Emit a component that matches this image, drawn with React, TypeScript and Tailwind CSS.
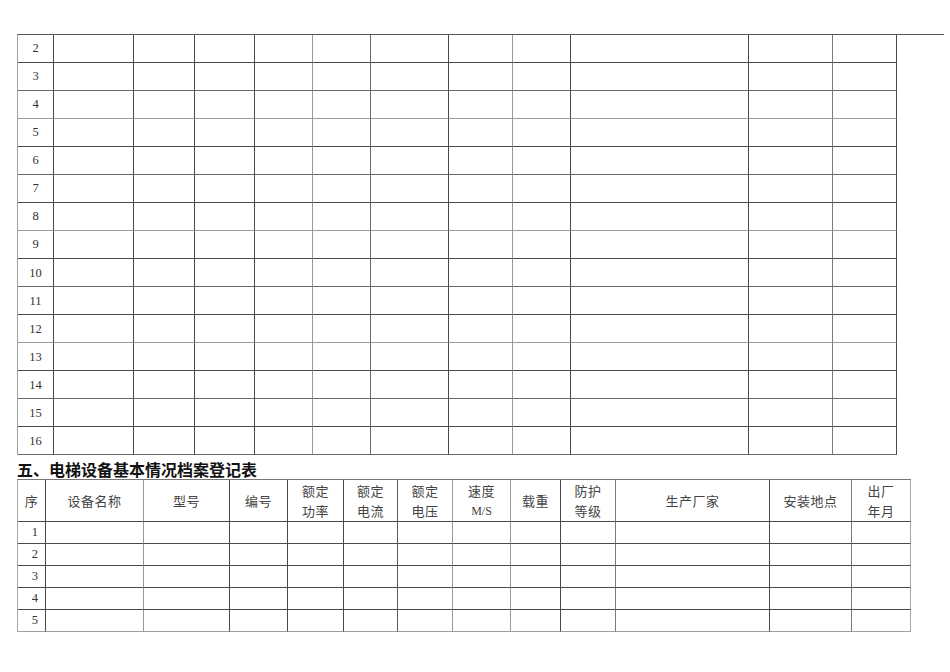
import React from "react";

const topCols = [
  { w: "w-[36px]", b: "border-r-[#4a4a4a]" },
  { w: "w-[80px]", b: "border-r-[#4a4a4a]" },
  { w: "w-[61px]", b: "border-r-[#4a4a4a]" },
  { w: "w-[60px]", b: "border-r-[#4a4a4a]" },
  { w: "w-[58px]", b: "border-r-[#9a9a9a]" },
  { w: "w-[58px]", b: "border-r-[#6a6a6a]" },
  { w: "w-[78px]", b: "border-r-[#4a4a4a]" },
  { w: "w-[64px]", b: "border-r-[#9a9a9a]" },
  { w: "w-[58px]", b: "border-r-[#4a4a4a]" },
  { w: "w-[178px]", b: "border-r-[#4a4a4a]" },
  { w: "w-[84px]", b: "border-r-[#7a7a7a]" },
  { w: "w-[64px]", b: "border-r-[#4a4a4a]" },
];

const topRowBorders = [
  "border-b-[#4a4a4a]",
  "border-b-[#6a6a6a]",
  "border-b-[#9a9a9a]",
  "border-b-[#4a4a4a]",
  "border-b-[#6a6a6a]",
  "border-b-[#4a4a4a]",
  "border-b-[#9a9a9a]",
  "border-b-[#4a4a4a]",
  "border-b-[#6a6a6a]",
  "border-b-[#4a4a4a]",
  "border-b-[#9a9a9a]",
  "border-b-[#4a4a4a]",
  "border-b-[#6a6a6a]",
  "border-b-[#4a4a4a]",
  "border-b-[#6a6a6a]",
];

const botCols = [
  { w: "w-[28px]", b: "border-r-[#4a4a4a]" },
  { w: "w-[98px]", b: "border-r-[#9a9a9a]" },
  { w: "w-[86px]", b: "border-r-[#4a4a4a]" },
  { w: "w-[58px]", b: "border-r-[#4a4a4a]" },
  { w: "w-[56px]", b: "border-r-[#4a4a4a]" },
  { w: "w-[54px]", b: "border-r-[#5a5a5a]" },
  { w: "w-[55px]", b: "border-r-[#9a9a9a]" },
  { w: "w-[58px]", b: "border-r-[#9a9a9a]" },
  { w: "w-[50px]", b: "border-r-[#4a4a4a]" },
  { w: "w-[55px]", b: "border-r-[#7a7a7a]" },
  { w: "w-[154px]", b: "border-r-[#4a4a4a]" },
  { w: "w-[82px]", b: "border-r-[#7a7a7a]" },
  { w: "w-[59px]", b: "border-r-[#a8a8a8]" },
];

const headers: string[][] = [
  ["序"],
  ["设备名称"],
  ["型号"],
  ["编号"],
  ["额定", "功率"],
  ["额定", "电流"],
  ["额定", "电压"],
  ["速度", "M/S"],
  ["载重"],
  ["防护", "等级"],
  ["生产厂家"],
  ["安装地点"],
  ["出厂", "年月"],
];

const serif = "font-['Liberation_Serif','DejaVu_Serif',serif]";
const cjk = "font-['Noto_Sans_CJK_SC','Noto_Sans',sans-serif]";

export default function App() {
  const topRows = Array.from({ length: 15 }, (_, i) => i + 2);
  const botRows = [1, 2, 3, 4, 5];
  return (
    <div className="w-[950px] h-[672px] bg-white overflow-hidden">
      {/* top table */}
      <div className="pt-[34px] pl-[17px] flex">
        <div className="border-l border-t border-l-[#a0a0a0] border-t-[#555]">
          {topRows.map((n, ri) => (
            <div key={n} className="flex h-[28.04px]">
              {topCols.map((c, ci) => (
                <div
                  key={ci}
                  className={`${c.w} h-full box-border border-r border-b ${c.b} ${topRowBorders[ri]} flex items-center justify-center`}
                >
                  {ci === 0 ? (
                    <span className={`${serif} text-[12.5px] text-[#333] leading-none`}>{n}</span>
                  ) : null}
                </div>
              ))}
            </div>
          ))}
        </div>
        <div className="w-[47px] h-0 border-t border-t-[#555]" />
      </div>

      {/* title */}
      <div className="pl-[17px] h-[24px] flex items-end">
        <div className={`${cjk} font-bold text-[16px] leading-[20px] text-[#111]`}>
          五、电梯设备基本情况档案登记表
        </div>
      </div>

      {/* bottom table */}
      <div className="pl-[17px] flex">
        <div className="border-l border-t border-l-[#a8a8a8] border-t-[#777]">
          <div className="flex h-[41.5px]">
            {botCols.map((c, ci) => (
              <div
                key={ci}
                className={`${c.w} h-full box-border border-r border-b ${c.b} border-b-[#4a4a4a] flex flex-col items-center justify-center`}
              >
                {headers[ci].map((t, ti) => (
                  <span
                    key={ti}
                    className={`${t === "M/S" ? serif + " text-[12px]" : cjk + " text-[13px] tracking-[0.5px]"} leading-[20px] text-[#444]`}
                  >
                    {t}
                  </span>
                ))}
              </div>
            ))}
          </div>
          {botRows.map((n) => (
            <div key={n} className="flex h-[22px]">
              {botCols.map((c, ci) => (
                <div
                  key={ci}
                  className={`${c.w} h-full box-border border-r border-b ${c.b} ${n === 5 ? "border-b-[#a0a0a0]" : "border-b-[#4a4a4a]"} flex items-center justify-end pr-[7px]`}
                >
                  {ci === 0 ? (
                    <span className={`${serif} text-[12.5px] text-[#333] leading-none`}>{n}</span>
                  ) : null}
                </div>
              ))}
            </div>
          ))}
        </div>
      </div>
    </div>
  );
}
